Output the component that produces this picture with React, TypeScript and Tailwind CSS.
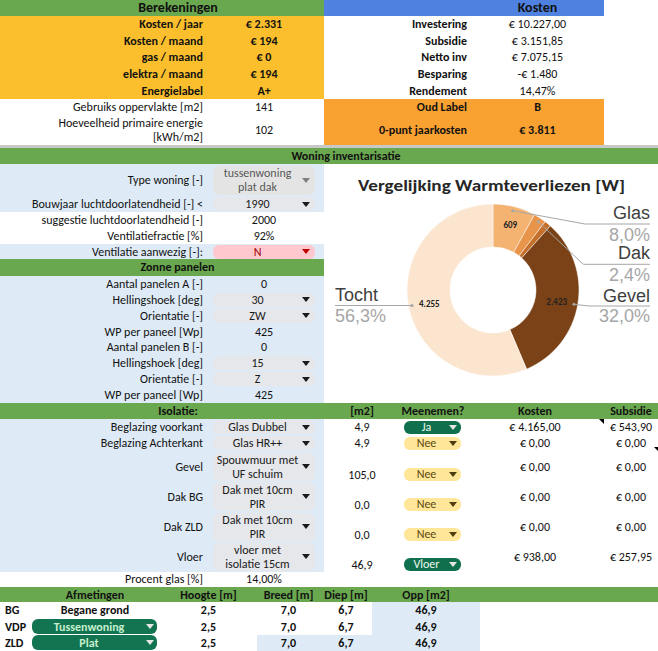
import React from "react";

type Tone = "grey" | "muted" | "pink" | "ja" | "nee" | "green";

const tones: Record<Tone, { box: string; caret: string }> = {
  grey: { box: "bg-[#e5e7eb] text-[#1a1a1a]", caret: "#1a1a1a" },
  muted: { box: "bg-[#e4e4e4] text-[#595959]", caret: "#808080" },
  pink: { box: "bg-[#ffc7ce] text-[#9c0006]", caret: "#c00000" },
  ja: { box: "bg-[#10704d] text-[#eef6ee]", caret: "#e6e6e6" },
  nee: { box: "bg-[#ffe699] text-[#5c4a12]", caret: "#4d3d10" },
  green: { box: "bg-[#137451] text-[#c6efce] font-bold", caret: "#e6e6e6" },
};

function Caret({ color }: { color: string }) {
  return (
    <svg width="8" height="5" viewBox="0 0 8 5" className="shrink-0">
      <path d="M0 0h8L4 5z" fill={color} />
    </svg>
  );
}

function Drop({
  tone = "grey",
  className = "",
  lines,
}: {
  tone?: Tone;
  className?: string;
  lines: string[];
}) {
  const t = tones[tone];
  return (
    <div className={`flex items-center rounded-[6px] ${t.box} ${className}`}>
      <div className="flex-1 text-center leading-[14px]">
        {lines.map((l) => (
          <div key={l}>{l}</div>
        ))}
      </div>
      <Caret color={t.caret} />
    </div>
  );
}

// left column rows: label | value
function Row({
  label,
  value,
  h,
  bg = "",
}: {
  label: React.ReactNode;
  value: React.ReactNode;
  h: string;
  bg?: string;
}) {
  return (
    <div className={`grid grid-cols-[208px_112px] items-center ${h} ${bg}`}>
      <div className="pr-[5px] text-right leading-[14px]">{label}</div>
      <div className="text-center">{value}</div>
    </div>
  );
}

function Donut() {
  const cx = 169;
  const cy = 126;
  const R = 86;
  const r = 43;
  const segs = [
    { a0: 0, a1: 28.8, fill: "#f4b371" },
    { a0: 28.8, a1: 37.4, fill: "#e8944a" },
    { a0: 37.4, a1: 41.8, fill: "#c4702b" },
    { a0: 41.8, a1: 157, fill: "#7a4216" },
    { a0: 157, a1: 360, fill: "#fce5cf" },
  ];
  const pt = (a: number, rad: number) => {
    const t = (a * Math.PI) / 180;
    return [cx + rad * Math.sin(t), cy - rad * Math.cos(t)];
  };
  const arc = (a0: number, a1: number) => {
    const large = a1 - a0 > 180 ? 1 : 0;
    const [x0, y0] = pt(a0, R);
    const [x1, y1] = pt(a1, R);
    const [x2, y2] = pt(a1, r);
    const [x3, y3] = pt(a0, r);
    return `M${x0} ${y0}A${R} ${R} 0 ${large} 1 ${x1} ${y1}L${x2} ${y2}A${r} ${r} 0 ${large} 0 ${x3} ${y3}Z`;
  };
  const name = "fill-[#404040] font-['Liberation_Sans',Arial,sans-serif] text-[18px]";
  const pct = "fill-[#a6a6a6] font-['Liberation_Sans',Arial,sans-serif] text-[18px]";
  const val = "fill-[#222] font-bold text-[9px]";
  return (
    <svg width="334" height="239" viewBox="0 0 334 239" className="block">
      <text
        x="167.5"
        y="27"
        textAnchor="middle"
        textLength="267"
        lengthAdjust="spacingAndGlyphs"
        className="fill-[#262626] text-[16px] font-bold"
      >
        Vergelijking Warmteverliezen [W]
      </text>
      {segs.map((s) => (
        <path key={s.a0} d={arc(s.a0, s.a1)} fill={s.fill} stroke="#fff" strokeWidth="0.5" />
      ))}
      <g stroke="#a6a6a6" strokeWidth="1" fill="none">
        <polyline points="188.7,46.7 261,60 326,60" />
        <polyline points="214.3,57.7 259.3,100.3 326,100.3" />
        <polyline points="250,140.3 265,142 326,142" />
        <polyline points="11,141.5 88,141.5" />
      </g>
      <g fill="#a6a6a6">
        <circle cx="188.7" cy="46.7" r="1.5" />
        <circle cx="214.3" cy="57.7" r="1.5" />
        <circle cx="250" cy="140.3" r="1.5" />
        <circle cx="88" cy="141.5" r="1.5" />
      </g>
      <text x="186.3" y="64" textAnchor="middle" className={val}>609</text>
      <text x="105.3" y="142.5" textAnchor="middle" className={val}>4.255</text>
      <text x="232.7" y="141" textAnchor="middle" className={val}>2.423</text>
      <text x="326" y="55" textAnchor="end" className={name}>Glas</text>
      <text x="326" y="76.7" textAnchor="end" className={pct}>8,0%</text>
      <text x="326" y="95.3" textAnchor="end" className={name}>Dak</text>
      <text x="326" y="117" textAnchor="end" className={pct}>2,4%</text>
      <text x="326" y="137.7" textAnchor="end" className={name}>Gevel</text>
      <text x="326" y="158.3" textAnchor="end" className={pct}>32,0%</text>
      <text x="11" y="137" className={name}>Tocht</text>
      <text x="11" y="157.7" className={pct}>56,3%</text>
    </svg>
  );
}

const isolatie: {
  label: string;
  drop: string[];
  m2: string;
  pill: string;
  tone: Tone;
  kosten: string;
  sub: string;
  h: string;
  tall: boolean;
}[] = [
  { label: "Beglazing voorkant", drop: ["Glas Dubbel"], m2: "4,9", pill: "Ja", tone: "ja", kosten: "€ 4.165,00", sub: "€ 543,90", h: "h-[16px]", tall: false },
  { label: "Beglazing Achterkant", drop: ["Glas HR++"], m2: "4,9", pill: "Nee", tone: "nee", kosten: "€ 0,00", sub: "€ 0,00", h: "h-[16.5px]", tall: false },
  { label: "Gevel", drop: ["Spouwmuur met", "UF schuim"], m2: "105,0", pill: "Nee", tone: "nee", kosten: "€ 0,00", sub: "€ 0,00", h: "h-[30px]", tall: true },
  { label: "Dak BG", drop: ["Dak met 10cm", "PIR"], m2: "0,0", pill: "Nee", tone: "nee", kosten: "€ 0,00", sub: "€ 0,00", h: "h-[30px]", tall: true },
  { label: "Dak ZLD", drop: ["Dak met 10cm", "PIR"], m2: "0,0", pill: "Nee", tone: "nee", kosten: "€ 0,00", sub: "€ 0,00", h: "h-[30px]", tall: true },
  { label: "Vloer", drop: ["vloer met", "isolatie 15cm"], m2: "46,9", pill: "Vloer", tone: "ja", kosten: "€ 938,00", sub: "€ 257,95", h: "h-[30px]", tall: true },
];

const zonne: [string, string, boolean][] = [
  ["Aantal panelen A [-]", "0", false],
  ["Hellingshoek [deg]", "30", true],
  ["Orientatie [-]", "ZW", true],
  ["WP per paneel [Wp]", "425", false],
  ["Aantal panelen B [-]", "0", false],
  ["Hellingshoek [deg]", "15", true],
  ["Orientatie [-]", "Z", true],
  ["WP per paneel [Wp]", "425", false],
];

export default function App() {
  return (
    <div className="h-[651px] w-[658px] overflow-hidden bg-white font-['Carlito','Lato',sans-serif] text-[12px] leading-none text-[#111]">
      {/* Berekeningen / Kosten */}
      <div className="flex">
        <div className="w-[324px]">
          <div className="h-[16px] bg-[#6aa84f] pl-[32px] text-center text-[14px] font-bold leading-[16px]">
            Berekeningen
          </div>
          <div className="bg-[#fbbf2d] font-bold">
            <Row h="h-[16.6px]" label="Kosten / jaar" value="€ 2.331" />
            <Row h="h-[16.6px]" label="Kosten / maand" value="€ 194" />
            <Row h="h-[16.6px]" label="gas / maand" value="€ 0" />
            <Row h="h-[16.6px]" label="elektra / maand" value="€ 194" />
            <Row h="h-[16.6px]" label="Energielabel" value="A+" />
          </div>
          <Row h="h-[17px]" label="Gebruiks oppervlakte [m2]" value="141" />
          <Row
            h="h-[29px]"
            label={
              <>
                Hoeveelheid primaire energie
                <br />
                [kWh/m2]
              </>
            }
            value="102"
          />
        </div>
        <div className="w-[280px]">
          <div className="h-[16px] bg-[#4f82e0] pl-[147px] text-center text-[14px] font-bold leading-[16px]">
            Kosten
          </div>
          {[
            ["Investering", "€ 10.227,00"],
            ["Subsidie", "€ 3.151,85"],
            ["Netto inv", "€ 7.075,15"],
            ["Besparing", "-€ 1.480"],
            ["Rendement", "14,47%"],
          ].map(([l, v]) => (
            <div key={l} className="grid h-[16.6px] grid-cols-[147px_133px] items-center">
              <div className="pr-[4px] text-right font-bold">{l}</div>
              <div className="text-center">{v}</div>
            </div>
          ))}
          <div className="bg-[#f9a131] font-bold">
            <div className="grid h-[17px] grid-cols-[147px_133px] items-center">
              <div className="pr-[4px] text-right">Oud Label</div>
              <div className="text-center">B</div>
            </div>
            <div className="grid h-[29px] grid-cols-[147px_133px] items-center">
              <div className="pr-[4px] text-right">0-punt jaarkosten</div>
              <div className="text-center">€ 3.811</div>
            </div>
          </div>
        </div>
      </div>
      <div className="h-[3px] bg-[#c8c8c8]" />

      {/* Woning inventarisatie */}
      <div className="h-[16px] bg-[#6aa84f] pl-[34px] text-center font-bold leading-[16px]">
        Woning inventarisatie
      </div>
      <div className="flex">
        <div className="w-[324px]">
          <div className="bg-[#deebf7]">
            <Row
              h="h-[32.5px]"
              label="Type woning [-]"
              value={<Drop tone="muted" className="ml-[5px] mr-[5px] h-[29px] pr-[5px]" lines={["tussenwoning", "plat dak"]} />}
            />
            <Row
              h="h-[15.75px]"
              label="Bouwjaar luchtdoorlatendheid [-] <"
              value={<Drop className="ml-[5px] mr-[5px] h-[14px] pr-[5px]" lines={["1990"]} />}
            />
          </div>
          <Row h="h-[15.75px]" label="suggestie luchtdoorlatendheid [-]" value="2000" />
          <Row h="h-[15.75px]" label="Ventilatiefractie [%]" value="92%" />
          <Row
            h="h-[15.75px]"
            bg="bg-[#deebf7]"
            label="Ventilatie aanwezig [-]:"
            value={<Drop tone="pink" className="ml-[5px] mr-[5px] h-[14px] pr-[5px]" lines={["N"]} />}
          />
          <div className="h-[16.5px] bg-[#6aa84f] pl-[31px] text-center font-bold leading-[16.5px]">
            Zonne panelen
          </div>
          <div className="bg-[#deebf7]">
            {zonne.map(([l, v, d], i) => (
              <Row
                key={i}
                h="h-[15.9px]"
                label={l}
                value={d ? <Drop className="ml-[5px] mr-[5px] h-[14px] pr-[5px]" lines={[v]} /> : v}
              />
            ))}
          </div>
        </div>
        <div className="flex-1">
          <Donut />
        </div>
      </div>

      {/* Isolatie */}
      <div className="grid h-[16px] grid-cols-[208px_116px_76px_66px_138px_54px] items-center bg-[#6aa84f] font-bold">
        <div className="col-span-2 pl-[32px] text-center">Isolatie:</div>
        <div className="text-center">[m2]</div>
        <div className="text-center">Meenemen?</div>
        <div className="text-center">Kosten</div>
        <div className="text-center">Subsidie</div>
      </div>
      <div className="relative">
        {isolatie.map((r) => (
          <div key={r.label} className={`grid grid-cols-[208px_116px_76px_66px_138px_54px] ${r.h}`}>
            <div className="flex items-center justify-end bg-[#deebf7] pr-[5px]">{r.label}</div>
            <div className="flex items-center bg-[#deebf7] pr-[4px]">
              <Drop
                className={`ml-[5px] mr-[5px] flex-1 pr-[5px] ${r.tall ? "h-[28px]" : "h-[14px]"}`}
                lines={r.drop}
              />
            </div>
            <div className={`flex justify-center ${r.tall ? "items-end pb-[1px]" : "items-center"}`}>{r.m2}</div>
            <div className={`flex ${r.tall ? "items-end pb-[1px]" : "items-center"}`}>
              <Drop tone={r.tone} className="ml-[4px] h-[13px] w-[57px] pr-[4px]" lines={[r.pill]} />
            </div>
            <div className="flex items-center justify-center">{r.kosten}</div>
            <div className="flex items-center justify-center">{r.sub}</div>
          </div>
        ))}
        <div className="absolute left-[599px] top-0 h-0 w-0 border-l-[5px] border-t-[5px] border-l-transparent border-t-black" />
        <div className="absolute right-0 top-[28px] h-0 w-0 border-l-[4px] border-t-[4px] border-l-transparent border-t-black" />
      </div>
      <Row h="h-[15.6px]" label="Procent glas [%]" value="14,00%" />

      {/* Afmetingen */}
      <div className="grid h-[15px] grid-cols-[30px_130px_97px_63px_52px_108px_178px] items-center bg-[#6aa84f] font-bold">
        <div />
        <div className="text-center">Afmetingen</div>
        <div className="text-center">Hoogte [m]</div>
        <div className="text-center">Breed [m]</div>
        <div className="text-center">Diep [m]</div>
        <div className="text-center">Opp [m2]</div>
        <div />
      </div>
      <div className="font-bold">
        {[
          { k: "BG", name: null, blue: false },
          { k: "VDP", name: "Tussenwoning", blue: false },
          { k: "ZLD", name: "Plat", blue: true },
        ].map((r) => (
          <div key={r.k} className="grid h-[16.3px] grid-cols-[30px_130px_97px_63px_52px_108px_178px]">
            <div className="flex items-center pl-[5px]">{r.k}</div>
            <div className="flex items-center">
              {r.name ? (
                <Drop tone="green" className="ml-[2px] mr-[3px] h-[15px] flex-1 pr-[3px]" lines={[r.name]} />
              ) : (
                <div className="flex-1 text-center">Begane grond</div>
              )}
            </div>
            <div className="flex items-center justify-center">2,5</div>
            <div className={`flex items-center justify-center ${r.blue ? "bg-[#deebf7]" : ""}`}>7,0</div>
            <div className={`flex items-center justify-center ${r.blue ? "bg-[#deebf7]" : ""}`}>6,7</div>
            <div className="flex items-center justify-center bg-[#deebf7]">46,9</div>
            <div />
          </div>
        ))}
      </div>
    </div>
  );
}
